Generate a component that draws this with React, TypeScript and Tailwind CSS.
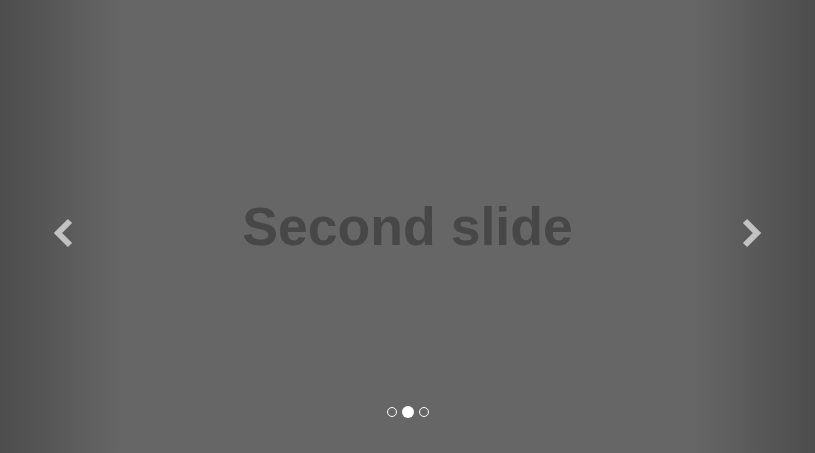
import React from 'react'

const slides = ['First slide', 'Second slide', 'Third slide']

const Chevron = ({ dir }: { dir: 'left' | 'right' }) => (
  <svg
    width="24"
    height="32"
    viewBox="0 0 24 32"
    className={dir === 'left' ? 'ml-[7px] mt-[12px]' : 'mr-[8px] mt-[12px]'}
  >
    <polyline
      points={dir === 'left' ? '17,4 5,16 17,28' : '7,4 19,16 7,28'}
      fill="none"
      stroke="#c2c2c2"
      strokeWidth="6"
      strokeLinecap="butt"
      strokeLinejoin="miter"
    />
  </svg>
)

export default function App() {
  const active = 1

  return (
    <div className="relative h-[453px] w-[815px] overflow-hidden bg-[#666] font-['Liberation_Sans',Arial,sans-serif]">
      <div className="flex h-full items-center justify-center">
        <h1 className="text-[53.6px] font-bold leading-none text-[#474747]">{slides[active]}</h1>
      </div>

      {/* prev */}
      <a className="absolute inset-y-0 left-0 flex w-[15%] items-center justify-center bg-[linear-gradient(to_right,rgba(0,0,0,0.25)_0,rgba(0,0,0,0)_100%)]">
        <Chevron dir="left" />
      </a>

      {/* next */}
      <a className="absolute inset-y-0 right-0 flex w-[15%] items-center justify-center bg-[linear-gradient(to_left,rgba(0,0,0,0.25)_0,rgba(0,0,0,0)_100%)]">
        <Chevron dir="right" />
      </a>

      <ol className="absolute bottom-[35px] left-0 right-0 flex items-center justify-center gap-1">
        {slides.map((s, i) =>
          i === active ? (
            <li key={s} className="h-3 w-3 rounded-full bg-white" />
          ) : (
            <li key={s} className="m-px h-2.5 w-2.5 rounded-full border border-white" />
          )
        )}
      </ol>
    </div>
  )
}
